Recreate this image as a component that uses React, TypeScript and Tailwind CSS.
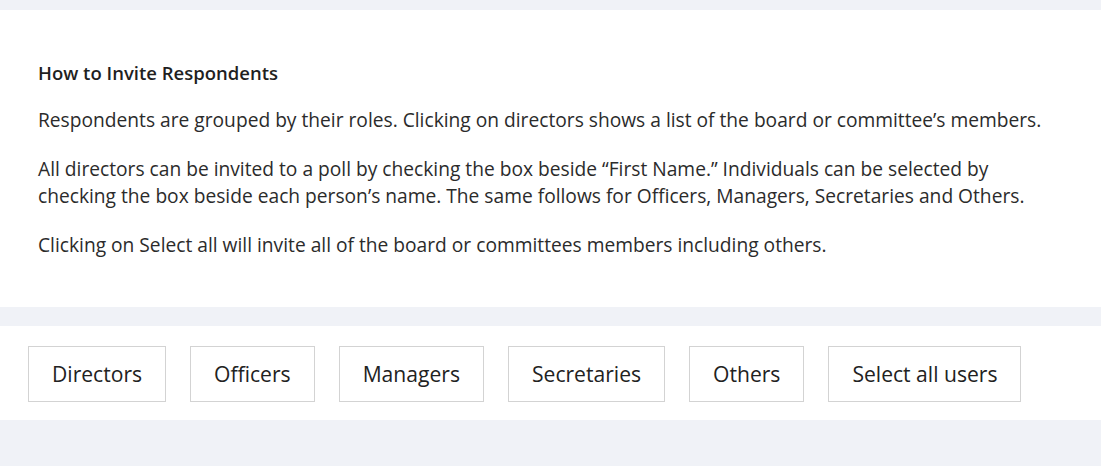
const roles = ['Directors', 'Officers', 'Managers', 'Secretaries', 'Others', 'Select all users'];

export default function App() {
  return (
    <div className="min-h-[466px] bg-[#f0f2f7] pt-[10px] text-[#2b2b2b]" style={{ fontFamily: '"Open Sans", "Noto Sans", sans-serif' }}>
      <section className="bg-white px-[38px] pt-[50px] pb-[49px]">
        <h2 className="text-[18.5px] font-semibold leading-[26px] text-[#1f1f1f]">How to Invite Respondents</h2>
        <p className="mt-[20px] text-[19.2px] leading-[27px]">
          Respondents are grouped by their roles. Clicking on directors shows a list of the board or committee’s members.
        </p>
        <p className="mt-[22px] max-w-[1000px] text-[19.2px] leading-[27px]">
          All directors can be invited to a poll by checking the box beside “First Name.” Individuals can be selected by
          checking the box beside each person’s name. The same follows for Officers, Managers, Secretaries and Others.
        </p>
        <p className="mt-[22px] text-[19.2px] leading-[27px]">
          Clicking on Select all will invite all of the board or committees members including others.
        </p>
      </section>
      <section className="mt-[19px] flex gap-6 bg-white px-[28px] pt-[20px] pb-[18px]">
        {roles.map((r) => (
          <button
            key={r}
            className="h-[56px] border border-[#d3d3d3] bg-white px-[23px] text-[21.1px] text-[#222]"
          >
            {r}
          </button>
        ))}
      </section>
    </div>
  );
}
